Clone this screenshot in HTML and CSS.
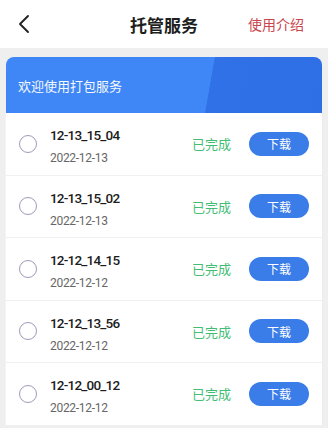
FILE: index.html
```html
<!DOCTYPE html>
<html lang="zh">
<head>
<meta charset="utf-8">
<link rel="stylesheet" href="styles.css">
</head>
<body>
<div class="page">
  <header class="topbar">
    <div class="left"><svg class="back" width="14" height="20" viewBox="0 0 14 20"><path d="M11 2 L3 10 L11 18" fill="none" stroke="#222" stroke-width="1.9" stroke-linecap="round" stroke-linejoin="round"/></svg></div>
    <div class="title">托管服务</div>
    <div class="intro">使用介绍</div>
  </header>
  <div class="body">
    <div class="banner"><span>欢迎使用打包服务</span></div>
    <div class="list">
      <div class="row">
        <span class="radio"></span>
        <div class="info"><div class="name">12-13_15_04</div><div class="date">2022-12-13</div></div>
        <span class="status">已完成</span>
        <span class="btn">下载</span>
      </div>
      <div class="row">
        <span class="radio"></span>
        <div class="info"><div class="name">12-13_15_02</div><div class="date">2022-12-13</div></div>
        <span class="status">已完成</span>
        <span class="btn">下载</span>
      </div>
      <div class="row">
        <span class="radio"></span>
        <div class="info"><div class="name">12-12_14_15</div><div class="date">2022-12-12</div></div>
        <span class="status">已完成</span>
        <span class="btn">下载</span>
      </div>
      <div class="row">
        <span class="radio"></span>
        <div class="info"><div class="name">12-12_13_56</div><div class="date">2022-12-12</div></div>
        <span class="status">已完成</span>
        <span class="btn">下载</span>
      </div>
      <div class="row">
        <span class="radio"></span>
        <div class="info"><div class="name">12-12_00_12</div><div class="date">2022-12-12</div></div>
        <span class="status">已完成</span>
        <span class="btn">下载</span>
      </div>
    </div>
  </div>
</div>
</body>
</html>
```
FILE: styles.css
```css
html, body {
  margin: 0;
  padding: 0;
  background: #ffffff;
  font-family: "Noto Sans CJK SC", "Noto Sans", sans-serif;
}
.page {
  width: 328px;
  height: 428px;
  overflow: hidden;
  background: #efefef;
}
.topbar {
  height: 48px;
  background: #ffffff;
  display: grid;
  grid-template-columns: 1fr auto 1fr;
  align-items: center;
}
.left {
  padding-left: 17px;
  display: flex;
  align-items: center;
}
.title {
  font-size: 17px;
  font-weight: 700;
  color: #1e1e1e;
}
.intro {
  font-size: 14px;
  color: #c8444e;
  text-align: right;
  padding-right: 24px;
}
.body {
  padding: 9px 6px 0 6px;
}
.banner {
  height: 56px;
  border-radius: 8px 8px 0 0;
  background: linear-gradient(100deg, #3f87f6 0%, #3f87f6 64%, #3171e8 64.2%, #2f6fe6 100%);
  display: flex;
  align-items: center;
  padding-left: 12px;
}
.banner span {
  color: #ffffff;
  font-size: 13px;
  opacity: 0.95;
}
.list {
  background: #ffffff;
  margin: 0 -1px;
  border-left: 1px solid #f4f4f4;
  border-right: 1px solid #ececec;
}
.row {
  height: 62.5px;
  box-sizing: border-box;
  border-bottom: 1px solid #f0f0f0;
  display: flex;
  align-items: center;
  padding-left: 13px;
}
.radio {
  width: 16px;
  height: 16px;
  border: 1.6px solid #9d9bbb;
  border-radius: 50%;
  flex: none;
}
.info {
  margin-left: 13px;
  flex: 1;
  display: flex;
  flex-direction: column;
  gap: 7px;
  margin-top: 6px;
  font-family: Roboto, "Noto Sans", sans-serif;
}
.name {
  font-size: 13.5px;
  color: #1c1c1c;
  font-weight: 500;
  line-height: 17px;
  letter-spacing: -0.8px;
}
.date {
  font-size: 12px;
  color: #666;
  line-height: 15px;
  letter-spacing: -0.3px;
}
.status {
  font-size: 13px;
  color: #44bd74;
  margin-right: 18px;
}
.btn {
  width: 60px;
  height: 24px;
  border-radius: 12px;
  background: #3a7de8;
  color: #fff;
  font-size: 12px;
  display: flex;
  align-items: center;
  justify-content: center;
  margin-right: 13px;
}
```
